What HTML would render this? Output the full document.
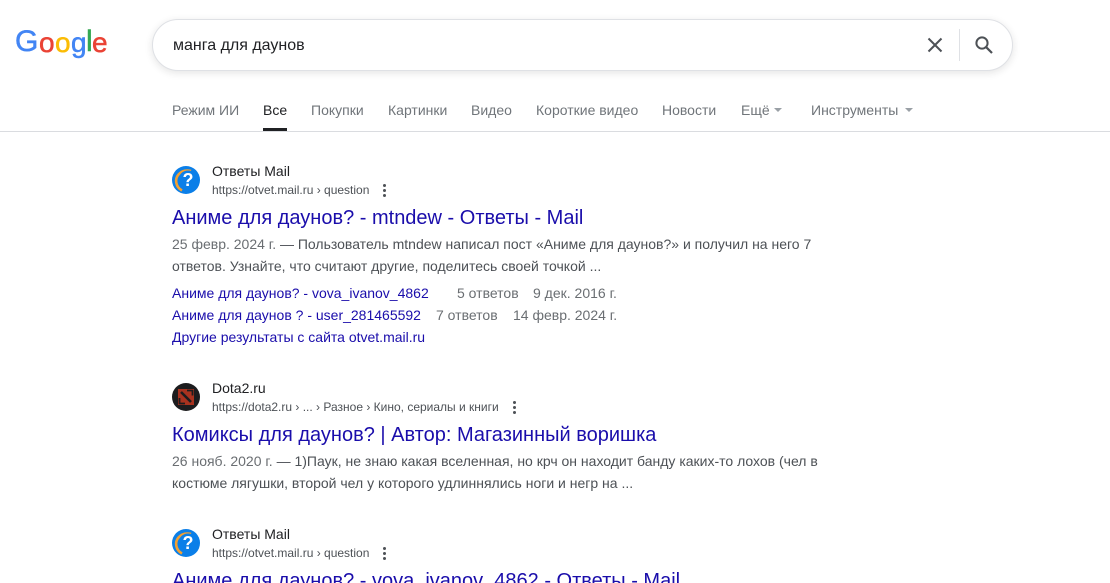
<!DOCTYPE html>
<html lang="ru"><head><meta charset="utf-8"><title>манга для даунов</title>
<style>
html,body{margin:0;padding:0;background:#fff;width:1110px;height:583px;overflow:hidden}
body{position:relative;font-family:"Liberation Sans",Arial,sans-serif}
.t{position:absolute;white-space:nowrap;line-height:20px}
.nav{font-size:14px;color:#70757a;top:100px}
.site{font-size:14px;color:#202124;left:212px}
.url{font-size:12px;color:#4d5156;left:212px}
.h{font-size:20px;color:#1a0dab;left:172px;line-height:26px}
.d{font-size:14px;color:#4d5156;left:172px;line-height:22px}
.l{font-size:14px;color:#1a0dab;left:172px}
.g{font-size:14px;color:#6a6e72}
.dots{position:absolute;width:3px}
.dots i{display:block;width:3px;height:3px;border-radius:50%;background:#4d5156;margin-bottom:2px}
.tri{position:absolute;width:0;height:0;border-left:4px solid transparent;border-right:4px solid transparent;border-top:4px solid #9aa0a6;top:108px}
.lg{position:absolute;line-height:40px;font-size:28px;-webkit-text-stroke:.5px currentColor}
svg{position:absolute}
</style></head><body>
<div class="lg" style="left:15px;top:22px;font-size:30px;color:#4285f4">G</div>
<div class="lg" style="left:39px;top:23px;color:#ea4335">o</div>
<div class="lg" style="left:55px;top:23px;color:#fbbc05">o</div>
<div class="lg" style="left:71px;top:23px;color:#4285f4">g</div>
<div class="lg" style="left:86px;top:22px;font-size:30px;color:#34a853">l</div>
<div class="lg" style="left:92px;top:23px;color:#ea4335">e</div>
<div style="position:absolute;left:152px;top:19px;width:859px;height:50px;border:1px solid #dfe1e5;border-radius:26px;box-shadow:0 2px 8px rgba(32,33,36,.12);background:#fff"></div>
<div class="t" style="left:173px;top:36px;font-size:16px;color:#202124">манга для даунов</div>
<svg style="left:925px;top:35px" width="20" height="20" viewBox="0 0 20 20"><path d="M3.500 3.500L16.500 16.500M16.500 3.500L3.500 16.500" stroke="#4d5156" stroke-width="2" fill="none"/></svg>
<div style="position:absolute;left:959px;top:29px;width:1px;height:32px;background:#dfe1e5"></div>
<svg style="left:972px;top:33px" width="24" height="24" viewBox="0 0 24 24"><circle cx="10" cy="10" r="5.600" stroke="#4d5156" stroke-width="2" fill="none"/><path d="M14.200 14.200L20 20" stroke="#4d5156" stroke-width="2.200" fill="none"/></svg>
<div class="t nav" style="left:172px">Режим ИИ</div>
<div class="t nav" style="left:263px;color:#202124">Все</div>
<div style="position:absolute;left:263px;top:128px;width:24px;height:3px;background:#202124"></div>
<div class="t nav" style="left:311px">Покупки</div>
<div class="t nav" style="left:388px">Картинки</div>
<div class="t nav" style="left:471px">Видео</div>
<div class="t nav" style="left:536px">Короткие видео</div>
<div class="t nav" style="left:662px">Новости</div>
<div class="t nav" style="left:741px">Ещё</div><div class="tri" style="left:774px"></div>
<div class="t nav" style="left:811px">Инструменты</div><div class="tri" style="left:905px"></div>
<div style="position:absolute;left:0;top:131px;width:1110px;height:1px;background:#dadce0"></div>

<svg style="left:172px;top:166px" width="28" height="28" viewBox="0 0 28 28"><circle cx="14" cy="14" r="14" fill="#0b7fe8"/><path d="M10 24.500C3.500 21 2.500 13 6.500 8.500C9.500 5 14 3.800 19 5" stroke="#f2a033" stroke-width="2.600" fill="none"/><circle cx="16" cy="14" r="9.500" fill="#0b7fe8"/><text x="16" y="20" font-family="Liberation Sans" font-size="18" font-weight="700" fill="#fff" text-anchor="middle">?</text></svg>
<div class="t site" style="top:161px">Ответы Mail</div>
<div class="t url" style="top:180px">https://otvet.mail.ru › question</div>
<div class="dots" style="left:383px;top:184px"><i></i><i></i><i></i></div>
<div class="t h" style="top:205px">Аниме для даунов? - mtndew - Ответы - Mail</div>
<div class="t d" style="top:233px"><span class="g">25 февр. 2024 г.</span> — Пользователь mtndew написал пост «Аниме для даунов?» и получил на него 7</div>
<div class="t d" style="top:255px">ответов. Узнайте, что считают другие, поделитесь своей точкой ...</div>
<div class="t l" style="top:283px">Аниме для даунов? - vova_ivanov_4862</div>
<div class="t g" style="left:457px;top:283px">5 ответов</div><div class="t g" style="left:533px;top:283px">9 дек. 2016 г.</div>
<div class="t l" style="top:305px">Аниме для даунов ? - user_281465592</div>
<div class="t g" style="left:436px;top:305px">7 ответов</div><div class="t g" style="left:513px;top:305px">14 февр. 2024 г.</div>
<div class="t l" style="top:327px">Другие результаты с сайта otvet.mail.ru</div>

<svg style="left:172px;top:383px" width="28" height="28" viewBox="0 0 28 28"><circle cx="14" cy="14" r="14" fill="#1c1c1e"/><rect x="6" y="6" width="16" height="16" fill="#a8321f"/><path d="M9 9L19 19" stroke="#1c1c1e" stroke-width="2.600"/><path d="M15 7.500H20.500V12.500M7.500 15V20.500H13" stroke="#1c1c1e" stroke-width="1.800" fill="none"/></svg>
<div class="t site" style="top:378px">Dota2.ru</div>
<div class="t url" style="top:397px">https://dota2.ru › ... › Разное › Кино, сериалы и книги</div>
<div class="dots" style="left:513px;top:401px"><i></i><i></i><i></i></div>
<div class="t h" style="top:422px">Комиксы для даунов? | Автор: Магазинный воришка</div>
<div class="t d" style="top:450px"><span class="g">26 нояб. 2020 г.</span> — 1)Паук, не знаю какая вселенная, но крч он находит банду каких-то лохов (чел в</div>
<div class="t d" style="top:472px">костюме лягушки, второй чел у которого удлиннялись ноги и негр на ...</div>

<svg style="left:172px;top:529px" width="28" height="28" viewBox="0 0 28 28"><circle cx="14" cy="14" r="14" fill="#0b7fe8"/><path d="M10 24.500C3.500 21 2.500 13 6.500 8.500C9.500 5 14 3.800 19 5" stroke="#f2a033" stroke-width="2.600" fill="none"/><circle cx="16" cy="14" r="9.500" fill="#0b7fe8"/><text x="16" y="20" font-family="Liberation Sans" font-size="18" font-weight="700" fill="#fff" text-anchor="middle">?</text></svg>
<div class="t site" style="top:524px">Ответы Mail</div>
<div class="t url" style="top:543px">https://otvet.mail.ru › question</div>
<div class="dots" style="left:383px;top:547px"><i></i><i></i><i></i></div>
<div class="t h" style="top:568px">Аниме для даунов? - vova_ivanov_4862 - Ответы - Mail</div>
</body></html>
